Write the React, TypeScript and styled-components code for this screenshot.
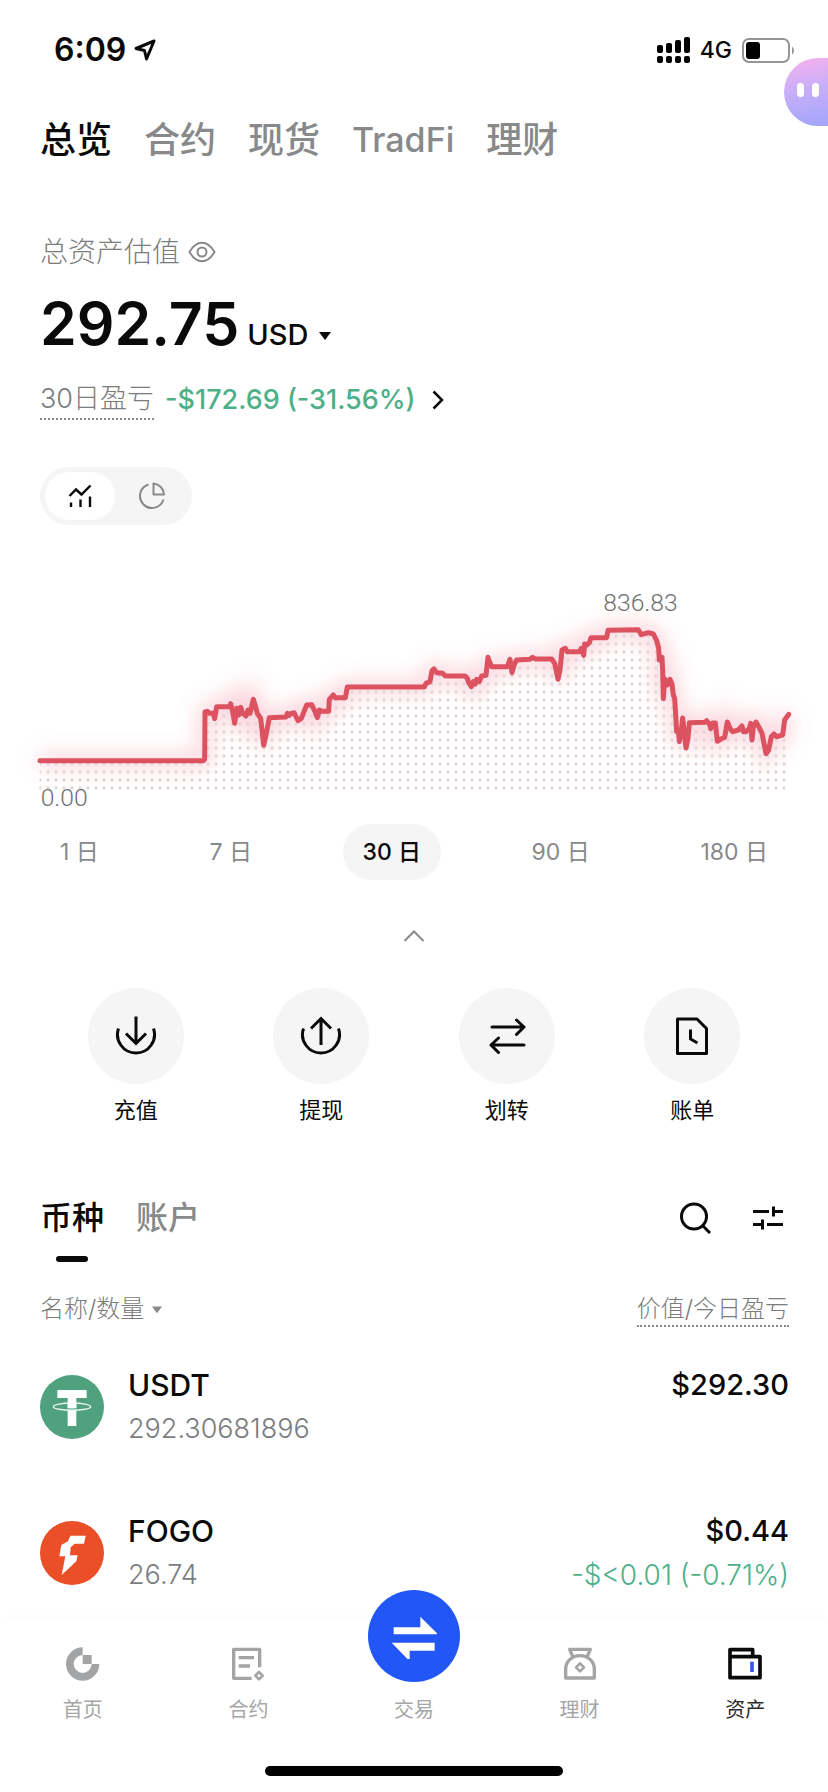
import React from "react";
import styled, { createGlobalStyle, css } from "styled-components";

const GlobalStyle = createGlobalStyle`
  * { box-sizing: border-box; }
  body {
    margin: 0;
    background: #fff;
    color: #0a0a0a;
    font-family: Inter, "Noto Sans CJK SC", sans-serif;
  }
  button, select {
    margin: 0;
    padding: 0;
    border: 0;
    background: none;
    color: inherit;
    font: inherit;
    cursor: pointer;
  }
  a { color: inherit; text-decoration: none; }
  svg { display: block; flex: none; }
`;

const GREY = "#88898a";
const SOFT_GREY = "#7b7c7d";
const GREEN = "#4db088";

const Page = styled.div`
  position: relative;
  min-height: 100vh;
  display: flex;
  flex-direction: column;
  overflow: hidden;
`;

const StatusBar = styled.div`
  display: flex;
  align-items: center;
  justify-content: space-between;
  height: 100px;
  padding: 0 33px 0 54px;
`;

const StatusGroup = styled.div<{ $gap: number }>`
  display: flex;
  align-items: center;
  gap: ${(p) => p.$gap}px;
`;

const Clock = styled.span`
  font-size: 32px;
  line-height: 40px;
  font-weight: 600;
`;

const Network = styled.span`
  font-size: 23px;
  line-height: 32px;
  font-weight: 500;
`;

const Assistant = styled.button`
  position: absolute;
  top: 58px;
  right: 0;
  display: flex;
  align-items: center;
  gap: 8px;
  width: 44px;
  height: 68px;
  padding: 0 0 4px 13px;
  border-radius: 34px 0 0 34px;
  background: linear-gradient(170deg, #f0b0f0 8%, #c9aff8 45%, #a5a6fb 95%);
`;

const AssistantEye = styled.span`
  width: 7px;
  height: 14px;
  border-radius: 4px;
  background: #fff;
`;

const TopTabs = styled.nav`
  display: flex;
  align-items: center;
  gap: 32px;
  height: 80px;
  padding: 0 40px;
`;

const TopTab = styled.a<{ $active?: boolean; $latin?: boolean }>`
  font-size: ${(p) => (p.$latin ? 34 : 36)}px;
  line-height: 48px;
  font-weight: 500;
  color: ${(p) => (p.$active ? "#0a0a0a" : GREY)};
`;

const Summary = styled.section`
  padding: 52px 40px 0;
`;

const SummaryLabel = styled.div`
  display: flex;
  align-items: center;
  gap: 8px;
  font-size: 28px;
  line-height: 40px;
  font-weight: 300;
  color: ${SOFT_GREY};
`;

const Balance = styled.div`
  display: flex;
  align-items: baseline;
  gap: 8px;
  margin-top: 16px;
`;

const BalanceValue = styled.strong`
  font-size: 59px;
  line-height: 72px;
  font-weight: 600;
`;

const Currency = styled.label`
  display: flex;
  align-items: center;
  gap: 10px;
`;

const CurrencySelect = styled.select`
  appearance: none;
  font-size: 29px;
  line-height: 36px;
  font-weight: 500;
`;

const ProfitRow = styled.div`
  display: flex;
  align-items: center;
  gap: 11px;
  margin-top: 20px;
  height: 40px;
  font-size: 27px;
  line-height: 38px;
`;

const DottedLabel = styled.span`
  display: inline-block;
  border-bottom: 2px dotted ${GREY};
  color: ${SOFT_GREY};
  font-weight: 300;
`;

const ProfitLink = styled.a`
  display: flex;
  align-items: center;
  gap: 16px;
  font-weight: 500;
  color: ${GREEN};
`;

const ViewToggle = styled.div`
  display: inline-flex;
  gap: 2px;
  height: 58px;
  margin-top: 47px;
  padding: 5px;
  border-radius: 29px;
  background: #f5f5f5;
`;

const ViewButton = styled.button<{ $active?: boolean }>`
  display: flex;
  align-items: center;
  justify-content: center;
  width: 70px;
  border-radius: 24px;
  background: ${(p) => (p.$active ? "#fff" : "transparent")};
`;

const Chart = styled.svg`
  width: 100%;
  height: auto;
  margin-top: 45px;
  overflow: visible;
`;

const Ranges = styled.div`
  display: flex;
  justify-content: space-between;
  padding: 14px 40px 0;
`;

const RangeButton = styled.button<{ $active?: boolean }>`
  height: 56px;
  padding: 0 20px;
  border-radius: 28px;
  font-size: 23px;
  line-height: 32px;
  ${(p) =>
    p.$active
      ? css`
          background: #f5f5f5;
          font-weight: 500;
        `
      : css`
          color: ${GREY};
        `}
`;

const Collapse = styled.button`
  display: flex;
  align-items: center;
  justify-content: center;
  align-self: center;
  width: 80px;
  height: 40px;
  margin-top: 36px;
`;

const Actions = styled.div`
  display: grid;
  grid-template-columns: repeat(4, 1fr);
  margin-top: 32px;
  padding: 0 43px;
`;

const Action = styled.button`
  display: flex;
  flex-direction: column;
  align-items: center;
  gap: 10px;
  font-size: 22px;
  line-height: 32px;
`;

const ActionDisc = styled.span`
  display: flex;
  align-items: center;
  justify-content: center;
  width: 96px;
  height: 96px;
  border-radius: 50%;
  background: #f5f5f5;
`;

const AssetsHead = styled.div`
  display: flex;
  justify-content: space-between;
  align-items: flex-start;
  margin-top: 72px;
  padding: 0 40px;
`;

const AssetTabs = styled.div`
  display: flex;
  gap: 32px;
`;

const AssetTab = styled.button<{ $active?: boolean }>`
  display: flex;
  flex-direction: column;
  align-items: center;
  gap: 18px;
  font-size: 32px;
  line-height: 40px;
  font-weight: 500;
  color: ${(p) => (p.$active ? "#0a0a0a" : GREY)};
  &::after {
    content: "";
    width: 32px;
    height: 6px;
    border-radius: 3px;
    background: ${(p) => (p.$active ? "#0a0a0a" : "transparent")};
  }
`;

const Tools = styled.div`
  display: flex;
  gap: 32px;
`;

const ToolButton = styled.button`
  display: flex;
  align-items: center;
  justify-content: center;
  width: 40px;
  height: 40px;
`;

const TableWrap = styled.div`
  flex: 1;
  padding: 31px 39px 0 40px;
`;

const AssetTable = styled.table`
  width: 100%;
  border-collapse: collapse;
`;

const HeadCell = styled.th<{ $end?: boolean }>`
  padding: 0;
  height: 34px;
  font-size: 24px;
  line-height: 32px;
  font-weight: 300;
  vertical-align: top;
  text-align: ${(p) => (p.$end ? "right" : "left")};
  color: ${SOFT_GREY};
`;

const SortButton = styled.button`
  display: flex;
  align-items: center;
  gap: 8px;
`;

const Cell = styled.td`
  padding: 38px 0 24px;
  vertical-align: top;
`;

const Asset = styled.div`
  display: flex;
  align-items: center;
  gap: 24px;
`;

const Lines = styled.div<{ $end?: boolean }>`
  display: flex;
  flex-direction: column;
  gap: 4px;
  line-height: 40px;
  text-align: ${(p) => (p.$end ? "right" : "left")};
`;

const Primary = styled.span<{ $money?: boolean }>`
  font-size: ${(p) => (p.$money ? 29 : 30)}px;
  font-weight: 500;
`;

const Secondary = styled.span<{ $fall?: boolean }>`
  font-size: ${(p) => (p.$fall ? 28 : 27)}px;
  font-weight: 300;
  color: ${(p) => (p.$fall ? GREEN : SOFT_GREY)};
`;

const BottomBar = styled.footer`
  padding: 26px 0 16px;
  background: #fff;
  box-shadow: 0 -1px 12px rgba(0, 0, 0, 0.02);
`;

const BottomNav = styled.nav`
  display: grid;
  grid-template-columns: repeat(5, 1fr);
`;

const NavItem = styled.a<{ $active?: boolean }>`
  display: flex;
  flex-direction: column;
  align-items: center;
  gap: 14px;
  font-size: 20px;
  line-height: 28px;
  color: ${(p) => (p.$active ? "#2b2b2b" : "#a5a6a7")};
`;

const NavIcon = styled.span`
  display: flex;
  align-items: center;
  justify-content: center;
  height: 36px;
`;

const TradeDisc = styled.span`
  display: flex;
  align-items: center;
  justify-content: center;
  width: 92px;
  height: 92px;
  margin-top: -56px;
  border-radius: 50%;
  background: #2356f6;
`;

const HomeIndicator = styled.div`
  width: 36%;
  height: 10px;
  margin: 42px auto 0;
  border-radius: 5px;
  background: #000;
`;

/* Asset value over the last 30 days, as x,y pairs in chart units. */
const SERIES =
  "120,572 610,572 614,568 615,426 622,424 628,430 640,430 644,446 650,410 688,410 692,401 698,425 704,460 710,415 716,435 722,412 728,430 738,438 744,420 750,430 760,388 768,415 772,430 782,445 786,480 791,526 797,500 808,443 858,441 862,430 868,436 874,430 882,428 888,440 894,452 904,445 912,425 920,405 935,404 945,425 952,443 958,420 965,424 986,424 988,388 1000,375 1006,383 1036,383 1042,351 1273,351 1278,340 1290,335 1296,302 1302,297 1310,308 1328,310 1336,318 1395,318 1402,325 1406,338 1414,350 1420,335 1426,342 1430,328 1438,335 1445,318 1458,316 1464,262 1468,275 1475,290 1522,290 1530,268 1536,308 1542,285 1550,270 1590,268 1598,262 1606,267 1655,267 1664,280 1674,328 1680,300 1686,240 1696,235 1702,245 1738,245 1744,235 1751,256 1754,222 1760,225 1768,218 1773,203 1820,203 1824,181 1915,179 1924,194 1945,188 1960,192 1970,212 1976,235 1978,270 1986,262 1988,300 1990,386 1994,326 2002,345 2010,328 2016,342 2020,375 2024,385 2030,485 2036,490 2038,515 2044,480 2048,444 2054,500 2058,534 2064,505 2068,458 2115,457 2120,452 2130,465 2132,476 2138,459 2146,459 2152,514 2162,508 2174,502 2182,456 2190,475 2198,485 2215,480 2226,468 2230,485 2238,485 2248,475 2252,460 2256,510 2260,470 2268,456 2276,470 2286,490 2290,510 2298,551 2306,540 2314,500 2322,492 2330,500 2348,495 2354,450 2366,433";

function ValueChart() {
  return (
    <Chart viewBox="0 0 2484 720" role="img" aria-label="总资产估值走势">
      <defs>
        <pattern id="dots" x="-12" y="-6" width="24" height="24" patternUnits="userSpaceOnUse">
          <circle cx="12" cy="12" r="5" fill="#e4d5d6" />
        </pattern>
        <filter id="glow" x="-10%" y="-50%" width="120%" height="200%">
          <feGaussianBlur stdDeviation="30" />
        </filter>
      </defs>
      <polyline points={SERIES} fill="none" stroke="#f2607c" strokeWidth="44" strokeOpacity="0.27" filter="url(#glow)" />
      <polygon points={`118,662 ${SERIES} 2356,662`} fill="url(#dots)" />
      <polyline points={SERIES} fill="none" stroke="#dd5260" strokeWidth="15" strokeLinecap="round" strokeLinejoin="round" />
      <text x="1810" y="123" fontFamily="Roboto, sans-serif" fontWeight="300" fontSize="74" fill="#717273">
        836.83
      </text>
      <text x="122" y="709" fontFamily="Roboto, sans-serif" fontWeight="300" fontSize="74" fill="#717273">
        0.00
      </text>
    </Chart>
  );
}

type IconProps = {
  w: number;
  h: number;
  color?: string;
  stroke?: number;
  children: React.ReactNode;
};

function Icon({ w, h, color = "#0a0a0a", stroke = 2, children }: IconProps) {
  return (
    <svg width={w} height={h} viewBox={`0 0 ${w} ${h}`} fill="none" stroke={color} strokeWidth={stroke} aria-hidden="true">
      {children}
    </svg>
  );
}

const Triangle = ({ color, size = 10 }: { color: string; size?: number }) => (
  <svg width={size} height={size} viewBox="0 0 12 12" aria-hidden="true">
    <path d="M0 3h12L6 11z" fill={color} />
  </svg>
);

const actions = [
  {
    label: "充值",
    icon: (
      <Icon w={42} h={42} stroke={3}>
        <path d="M3.500 13.500A18.500 18.500 0 1 0 38.500 13.500" />
        <path d="M21 1.500v27M11 18.500l10 10 10-10" />
      </Icon>
    ),
  },
  {
    label: "提现",
    icon: (
      <Icon w={42} h={42} stroke={3}>
        <path d="M3.500 13.500A18.500 18.500 0 1 0 38.500 13.500" />
        <path d="M21 30V3.500M11 13.500L21 3.500l10 10" />
      </Icon>
    ),
  },
  {
    label: "划转",
    icon: (
      <Icon w={38} h={38} stroke={3}>
        <path d="M4 10h32M28.500 3l7.500 7-7.500 7.500M36 28H3M10.500 21L3 28l7.500 7.500" strokeLinecap="round" strokeLinejoin="round" />
      </Icon>
    ),
  },
  {
    label: "账单",
    icon: (
      <Icon w={34} h={40} stroke={3}>
        <path d="M2.500 3h19.500l9.500 9.500V37.500H2.500z" strokeLinejoin="round" />
        <path d="M15.500 13.500v9.500l7 4" />
      </Icon>
    ),
  },
];

const ranges = ["1 日", "7 日", "30 日", "90 日", "180 日"];

const TetherLogo = () => (
  <svg width="64" height="64" viewBox="0 0 192 192" aria-hidden="true">
    <circle cx="96" cy="96" r="96" fill="#50a17d" />
    <path d="M52 45h88v24h-31v84h-26v-84h-31z" fill="#fff" />
    <ellipse cx="96" cy="95" rx="56" ry="11" fill="none" stroke="#e9f5ef" strokeWidth="4" />
    <path d="M83 80h26v19q-13 2-26 0z" fill="#fff" />
    <path d="M83 101q13 2 26 0" fill="none" stroke="#50a17d" strokeWidth="3" />
  </svg>
);

const FogoLogo = () => (
  <svg width="64" height="64" viewBox="0 0 192 192" aria-hidden="true">
    <circle cx="96" cy="96" r="96" fill="#ea4f27" />
    <path d="M91 44h46l-5 24h-28l-12 11-2 24h23l-4 18-44 41 11-56h-18l6-34 20-11z" fill="#fff" />
  </svg>
);

const assets = [
  { name: "USDT", amount: "292.30681896", value: "$292.30", change: "", logo: <TetherLogo /> },
  { name: "FOGO", amount: "26.74", value: "$0.44", change: "-$<0.01 (-0.71%)", logo: <FogoLogo /> },
];

const NAV_GREY = "#a3a4a5";

export default function App() {
  return (
    <>
      <GlobalStyle />
      <Page>
        <StatusBar>
          <StatusGroup $gap={8}>
            <Clock>6:09</Clock>
            <Icon w={22} h={22} stroke={3}>
              <path d="M20 2L2 9.500l8.500 2 2 8.500z" strokeLinejoin="round" />
            </Icon>
          </StatusGroup>
          <StatusGroup $gap={10}>
            <Icon w={33} h={26} stroke={0}>
              <g fill="#000">
                <rect x="0" y="8" width="6" height="8" rx="2" />
                <rect x="9" y="6" width="6" height="10" rx="2" />
                <rect x="18" y="3" width="6" height="13" rx="2" />
                <rect x="27" y="0" width="6" height="16" rx="2" />
                <rect x="0" y="19" width="6" height="7" rx="2" />
                <rect x="9" y="19" width="6" height="7" rx="2" />
                <rect x="18" y="19" width="6" height="7" rx="2" />
                <rect x="27" y="19" width="6" height="7" rx="2" />
              </g>
            </Icon>
            <Network>4G</Network>
            <Icon w={53} h={25} color="#959595">
              <rect x="1" y="1" width="46" height="23" rx="6" />
              <rect x="4" y="4" width="14" height="17" rx="3" fill="#000" stroke="none" />
              <path d="M50 8.500a5 5 0 0 1 0 8z" fill="#959595" stroke="none" />
            </Icon>
          </StatusGroup>
        </StatusBar>
        <Assistant aria-label="助手">
          <AssistantEye />
          <AssistantEye />
        </Assistant>

        <TopTabs>
          <TopTab href="#overview" $active>总览</TopTab>
          <TopTab href="#futures">合约</TopTab>
          <TopTab href="#spot">现货</TopTab>
          <TopTab href="#tradfi" $latin>TradFi</TopTab>
          <TopTab href="#earn">理财</TopTab>
        </TopTabs>

        <Summary>
          <SummaryLabel>
            总资产估值
            <button aria-label="隐藏金额">
              <Icon w={28} h={22} color={GREY}>
                <path d="M1.500 11C5 5 9.500 1.800 14 1.800S23 5 26.500 11C23 17 18.500 20.200 14 20.200S5 17 1.500 11z" strokeLinejoin="round" />
                <circle cx="14" cy="11" r="4.500" />
              </Icon>
            </button>
          </SummaryLabel>
          <Balance>
            <BalanceValue>292.75</BalanceValue>
            <Currency>
              <CurrencySelect aria-label="计价货币" defaultValue="USD">
                <option>USD</option>
              </CurrencySelect>
              <Triangle color="#0a0a0a" size={12} />
            </Currency>
          </Balance>
          <ProfitRow>
            <DottedLabel>30日盈亏</DottedLabel>
            <ProfitLink href="#pnl">
              -$172.69 (-31.56%)
              <Icon w={12} h={20}>
                <path d="M1.500 1.500L10 10l-8.500 8.500" strokeWidth="2.500" />
              </Icon>
            </ProfitLink>
          </ProfitRow>
          <ViewToggle>
            <ViewButton $active aria-label="走势图" aria-pressed="true">
              <Icon w={24} h={24}>
                <path d="M1.500 12L8 5.500l5.500 5L22.500 1.500" strokeWidth="2.400" />
                <path d="M3 18.500V23M12.500 15.500V23M22 12.500V23" strokeWidth="2.400" />
              </Icon>
            </ViewButton>
            <ViewButton aria-label="分布图" aria-pressed="false">
              <Icon w={28} h={28} color={GREY}>
                <path d="M10.500 2.500A12 12 0 1 0 25.500 17.500" />
                <path d="M15.500 1.500A11.500 11.500 0 0 1 26 12.500H15.500z" strokeLinejoin="round" />
              </Icon>
            </ViewButton>
          </ViewToggle>
        </Summary>

        <ValueChart />

        <Ranges>
          {ranges.map((r) => (
            <RangeButton key={r} $active={r === "30 日"} aria-pressed={r === "30 日"}>
              {r}
            </RangeButton>
          ))}
        </Ranges>

        <Collapse aria-label="收起">
          <Icon w={22} h={12} color={GREY}>
            <path d="M1.500 11L11 1.500 20.500 11" />
          </Icon>
        </Collapse>

        <Actions>
          {actions.map((a) => (
            <Action key={a.label}>
              <ActionDisc>{a.icon}</ActionDisc>
              {a.label}
            </Action>
          ))}
        </Actions>

        <AssetsHead>
          <AssetTabs>
            <AssetTab $active>币种</AssetTab>
            <AssetTab>账户</AssetTab>
          </AssetTabs>
          <Tools>
            <ToolButton aria-label="搜索">
              <Icon w={32} h={32} stroke={3}>
                <circle cx="14" cy="14.500" r="12.500" />
                <path d="M22.500 23.500l7.500 7.500" />
              </Icon>
            </ToolButton>
            <ToolButton aria-label="筛选">
              <Icon w={30} h={24} stroke={3}>
                <path d="M0 5.500h16M20.500 5.500H30M20.500 0.500v10M0 18.500h9.500M9.500 13.500v10M14 18.500h16" />
              </Icon>
            </ToolButton>
          </Tools>
        </AssetsHead>

        <TableWrap>
          <AssetTable>
            <thead>
              <tr>
                <HeadCell>
                  <SortButton>
                    名称/数量
                    <Triangle color={GREY} />
                  </SortButton>
                </HeadCell>
                <HeadCell $end>
                  <DottedLabel>价值/今日盈亏</DottedLabel>
                </HeadCell>
              </tr>
            </thead>
            <tbody>
              {assets.map((a) => (
                <tr key={a.name}>
                  <Cell>
                    <Asset>
                      {a.logo}
                      <Lines>
                        <Primary>{a.name}</Primary>
                        <Secondary>{a.amount}</Secondary>
                      </Lines>
                    </Asset>
                  </Cell>
                  <Cell>
                    <Lines $end>
                      <Primary $money>{a.value}</Primary>
                      {a.change && <Secondary $fall>{a.change}</Secondary>}
                    </Lines>
                  </Cell>
                </tr>
              ))}
            </tbody>
          </AssetTable>
        </TableWrap>

        <BottomBar>
          <BottomNav>
            <NavItem href="#home">
              <NavIcon>
                <svg width="34" height="34" viewBox="0 0 102 102" fill={NAV_GREY} aria-hidden="true">
                  <path d="M50 1A50 50 0 1 0 100 51H77A27 27 0 1 1 50 24z" />
                  <rect x="50" y="24" width="27" height="27" />
                </svg>
              </NavIcon>
              首页
            </NavItem>
            <NavItem href="#contracts">
              <NavIcon>
                <svg width="34" height="34" viewBox="0 0 102 102" fill="none" stroke={NAV_GREY} strokeWidth="10" aria-hidden="true">
                  <path d="M62 94H8V7h78v54" strokeLinejoin="round" />
                  <path d="M23 32h46M23 57h34" />
                  <path d="M84 75l11 11-11 11-11-11z" strokeWidth="8" strokeLinejoin="round" />
                </svg>
              </NavIcon>
              合约
            </NavItem>
            <NavItem href="#trade">
              <TradeDisc>
                <svg width="46" height="46" viewBox="0 0 138 138" fill="#fff" aria-hidden="true">
                  <path d="M8 43h80V11l53 53H8zM2 89h129v24H56v32z" />
                </svg>
              </TradeDisc>
              交易
            </NavItem>
            <NavItem href="#wealth">
              <NavIcon>
                <svg width="34" height="34" viewBox="0 0 102 102" fill="none" stroke={NAV_GREY} strokeWidth="10" strokeLinejoin="round" aria-hidden="true">
                  <path d="M8 93V66C8 44 26 26 51 26S94 44 94 66V93z" />
                  <path d="M29 28L20 7h62L73 28" />
                  <path d="M51 49l12 12-12 12-12-12z" strokeWidth="8" />
                </svg>
              </NavIcon>
              理财
            </NavItem>
            <NavItem href="#assets" $active>
              <NavIcon>
                <svg width="34" height="34" viewBox="0 0 102 102" fill="none" stroke="#0a0a0a" strokeWidth="11" strokeLinejoin="round" aria-hidden="true">
                  <path d="M6 29V8h68v21M6 29h90v63H6z" />
                  <path d="M72 44v31" stroke="#3a55e8" />
                </svg>
              </NavIcon>
              资产
            </NavItem>
          </BottomNav>
          <HomeIndicator />
        </BottomBar>
      </Page>
    </>
  );
}
